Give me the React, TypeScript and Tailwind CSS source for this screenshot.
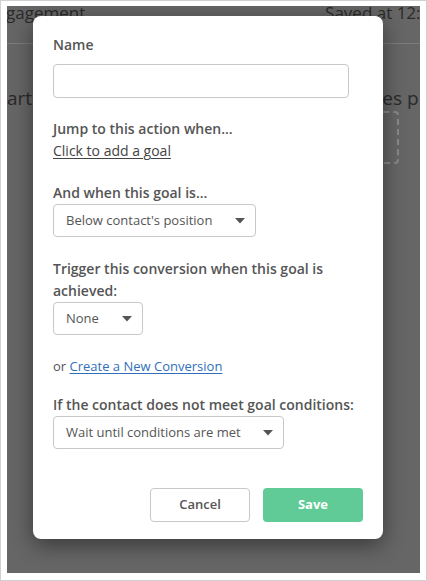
import React from "react";

const Caret = () => (
  <svg width="10" height="6" viewBox="0 0 10 6" className="shrink-0">
    <path d="M0 0 L10 0 L5 5.5 Z" fill="#555" />
  </svg>
);

type SelectProps = { value: string; width: string };

const FakeSelect = ({ value, width }: SelectProps) => (
  <div
    className={`flex h-[33px] items-center justify-between rounded-[4px] border border-[#c8c8c8] bg-white pl-3 pr-[10px] text-[13px] text-[#555] ${width}`}
  >
    <span>{value}</span>
    <Caret />
  </div>
);

const Label = ({ children }: { children: React.ReactNode }) => (
  <div className="text-[14px] font-semibold leading-[22px] text-[#555]">{children}</div>
);

const App = () => {
  return (
    <div
      className="h-[581px] w-[427px] overflow-hidden border border-[#d0d0d0] bg-white pb-[7px] pl-[6px] pr-[6px] pt-[5px]"
      style={{ fontFamily: '"Open Sans", "Liberation Sans", sans-serif' }}
    >
      <div className="relative h-full w-full overflow-hidden bg-[#666]">
        {/* page behind the overlay */}
        <div className="flex h-[38px] items-start justify-between border-b border-[#7c7c7c] text-[17px] leading-[16px] text-[#2a2a2a]">
          <span className="-ml-[1px] mt-[-1px]">gagement</span>
          <span className="-mr-[20px] mt-[-1px] whitespace-nowrap">Saved at 12:45</span>
        </div>
        <div className="mt-[44px] flex items-start justify-between text-[19px] leading-[20px] text-[#2a2a2a]">
          <span>art the</span>
          <div className="flex flex-col items-end">
            <span className="-mr-[14px] whitespace-nowrap">les pla</span>
            <div className="mr-[21px] mt-[3px] h-[53px] w-[40px] rounded-[4px] border-2 border-dashed border-[#8a8a8a]" />
          </div>
        </div>

        {/* modal */}
        <div className="absolute left-[26px] top-[10px] flex h-[523px] w-[350px] flex-col rounded-[8px] bg-white px-5 pb-[17px] pt-[18px] shadow-[0_6px_22px_rgba(0,0,0,0.45)]">
          <Label>Name</Label>
          <div className="mt-2 h-[34px] w-[296px] rounded-[4px] border border-[#c8c8c8]" />

          <div className="mt-5">
            <Label>Jump to this action when...</Label>
            <div className="text-[14px] leading-[22px] text-[#444] underline underline-offset-2">
              Click to add a goal
            </div>
          </div>

          <div className="mt-5">
            <Label>And when this goal is...</Label>
            <FakeSelect value="Below contact's position" width="w-[203px]" />
          </div>

          <div className="mt-[21px]">
            <Label>
              Trigger this conversion when this goal is
              <br />
              achieved:
            </Label>
            <FakeSelect value="None" width="w-[90px]" />
          </div>

          <div className="mt-5 text-[13px] leading-[22px] text-[#555]">
            or{" "}
            <span className="text-[#2f6fbb] underline underline-offset-2">Create a New Conversion</span>
          </div>

          <div className="mt-[17px]">
            <Label>If the contact does not meet goal conditions:</Label>
            <FakeSelect value="Wait until conditions are met" width="w-[231px]" />
          </div>

          <div className="mt-auto flex justify-end gap-[13px]">
            <button className="h-[34px] w-[100px] rounded-[4px] border border-[#c8c8c8] bg-white text-[13px] font-semibold text-[#555]">
              Cancel
            </button>
            <button className="h-[34px] w-[100px] rounded-[4px] bg-[#61cb97] text-[13px] font-bold text-white">
              Save
            </button>
          </div>
        </div>
      </div>
    </div>
  );
};

export default App;
